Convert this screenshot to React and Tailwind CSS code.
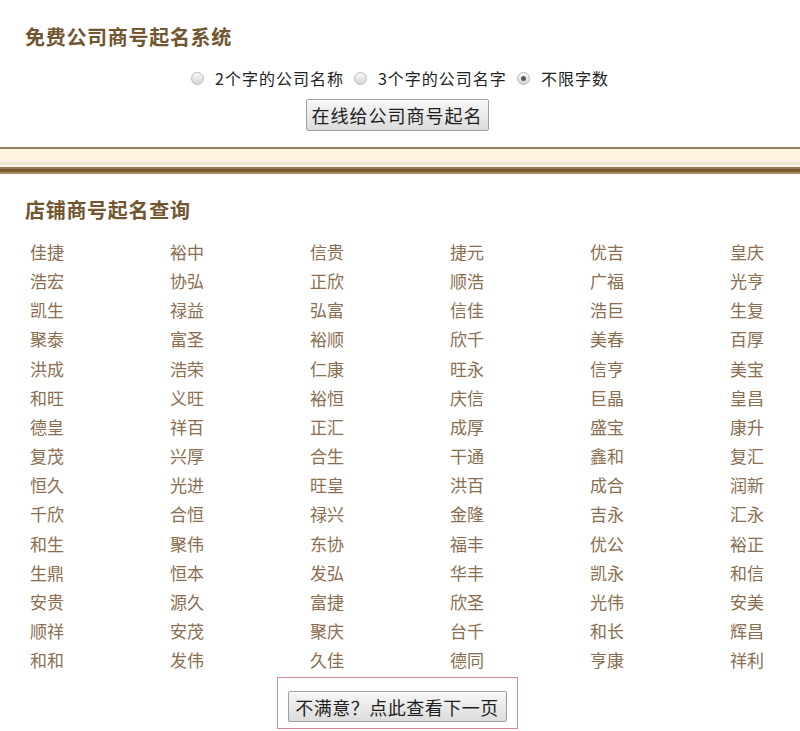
import { useState } from "react";

const names = [
  ["佳捷", "裕中", "信贵", "捷元", "优吉", "皇庆"],
  ["浩宏", "协弘", "正欣", "顺浩", "广福", "光亨"],
  ["凯生", "禄益", "弘富", "信佳", "浩巨", "生复"],
  ["聚泰", "富圣", "裕顺", "欣千", "美春", "百厚"],
  ["洪成", "浩荣", "仁康", "旺永", "信亨", "美宝"],
  ["和旺", "义旺", "裕恒", "庆信", "巨晶", "皇昌"],
  ["德皇", "祥百", "正汇", "成厚", "盛宝", "康升"],
  ["复茂", "兴厚", "合生", "干通", "鑫和", "复汇"],
  ["恒久", "光进", "旺皇", "洪百", "成合", "润新"],
  ["千欣", "合恒", "禄兴", "金隆", "吉永", "汇永"],
  ["和生", "聚伟", "东协", "福丰", "优公", "裕正"],
  ["生鼎", "恒本", "发弘", "华丰", "凯永", "和信"],
  ["安贵", "源久", "富捷", "欣圣", "光伟", "安美"],
  ["顺祥", "安茂", "聚庆", "台千", "和长", "辉昌"],
  ["和和", "发伟", "久佳", "德同", "亨康", "祥利"],
];

const options = ["2个字的公司名称", "3个字的公司名字", "不限字数"];

function Radio({ checked }) {
  return (
    <span className="inline-flex items-center justify-center w-[13px] h-[13px] rounded-full border border-[#b9b9b9] bg-gradient-to-b from-[#fafafa] to-[#d6d6d6]">
      {checked && <span className="w-[5px] h-[5px] rounded-full bg-[#5a5a5a]" />}
    </span>
  );
}

function GrayButton({ children, className }) {
  return (
    <button
      className={
        "border border-[#9f9f9f] rounded-[2px] bg-gradient-to-b from-[#f7f7f7] to-[#dcdcdc] text-[18px] text-[#1e1e1e] leading-none shadow-[inset_0_1px_0_#fff] " +
        className
      }
    >
      {children}
    </button>
  );
}

export default function App() {
  const [choice, setChoice] = useState(2);

  return (
    <div className="w-[800px] h-[731px] overflow-hidden bg-white font-['Noto_Sans_CJK_SC',sans-serif]">
      <section className="pt-[26px]">
        <h1 className="pl-[25px] text-[20px] leading-[22px] font-bold tracking-[0.7px] text-[#71562f]">
          免费公司商号起名系统
        </h1>
        <div className="mt-[20px] flex justify-center items-center gap-[10px] text-[16px] leading-[20px] text-[#222] tracking-[1px]">
          {options.map((o, i) => (
            <label
              key={o}
              onClick={() => setChoice(i)}
              className="flex items-center cursor-pointer"
            >
              <span className="mr-[11px] flex">
                <Radio checked={choice === i} />
              </span>
              <span>{o}</span>
            </label>
          ))}
        </div>
        <div className="mt-[11px] pr-[6px] flex justify-center">
          <GrayButton className="w-[183px] h-[32px] tracking-[1px]">在线给公司商号起名</GrayButton>
        </div>
      </section>

      <div className="mt-[16px]">
        <div className="h-[2px] bg-[#8e7c5f]" />
        <div className="h-[13px] bg-[#fff4e2]" />
        <div className="h-[3px] bg-[#f1e8cf]" />
        <div className="h-[2px] bg-[#fbf6ea]" />
        <div className="h-[2px] bg-[#9a7a52]" />
        <div className="h-[3px] bg-[#7a5a35]" />
        <div className="h-[2px] bg-[#a88a63]" />
      </div>

      <section className="pt-[25px]">
        <h2 className="pl-[25px] text-[20px] leading-[22px] font-bold tracking-[0.7px] text-[#71562f]">
          店铺商号起名查询
        </h2>
        <div className="mt-[16px] pl-[30px] grid grid-cols-[140px_140px_140px_140px_140px_1fr] text-[17px] leading-[29.15px] text-[#8a6e4f]">
          {names.flat().map((n, i) => (
            <a key={i} href="#" className="cursor-pointer">
              {n}
            </a>
          ))}
        </div>
      </section>

      <div className="mt-[3px] pr-[6px] flex justify-center">
        <div className="w-[241px] h-[52px] pt-[13px] border-[1.5px] border-[#d48a90] flex items-start justify-center">
          <GrayButton className="w-[219px] h-[31px] tracking-[0.5px]">不满意？点此查看下一页</GrayButton>
        </div>
      </div>
    </div>
  );
}
